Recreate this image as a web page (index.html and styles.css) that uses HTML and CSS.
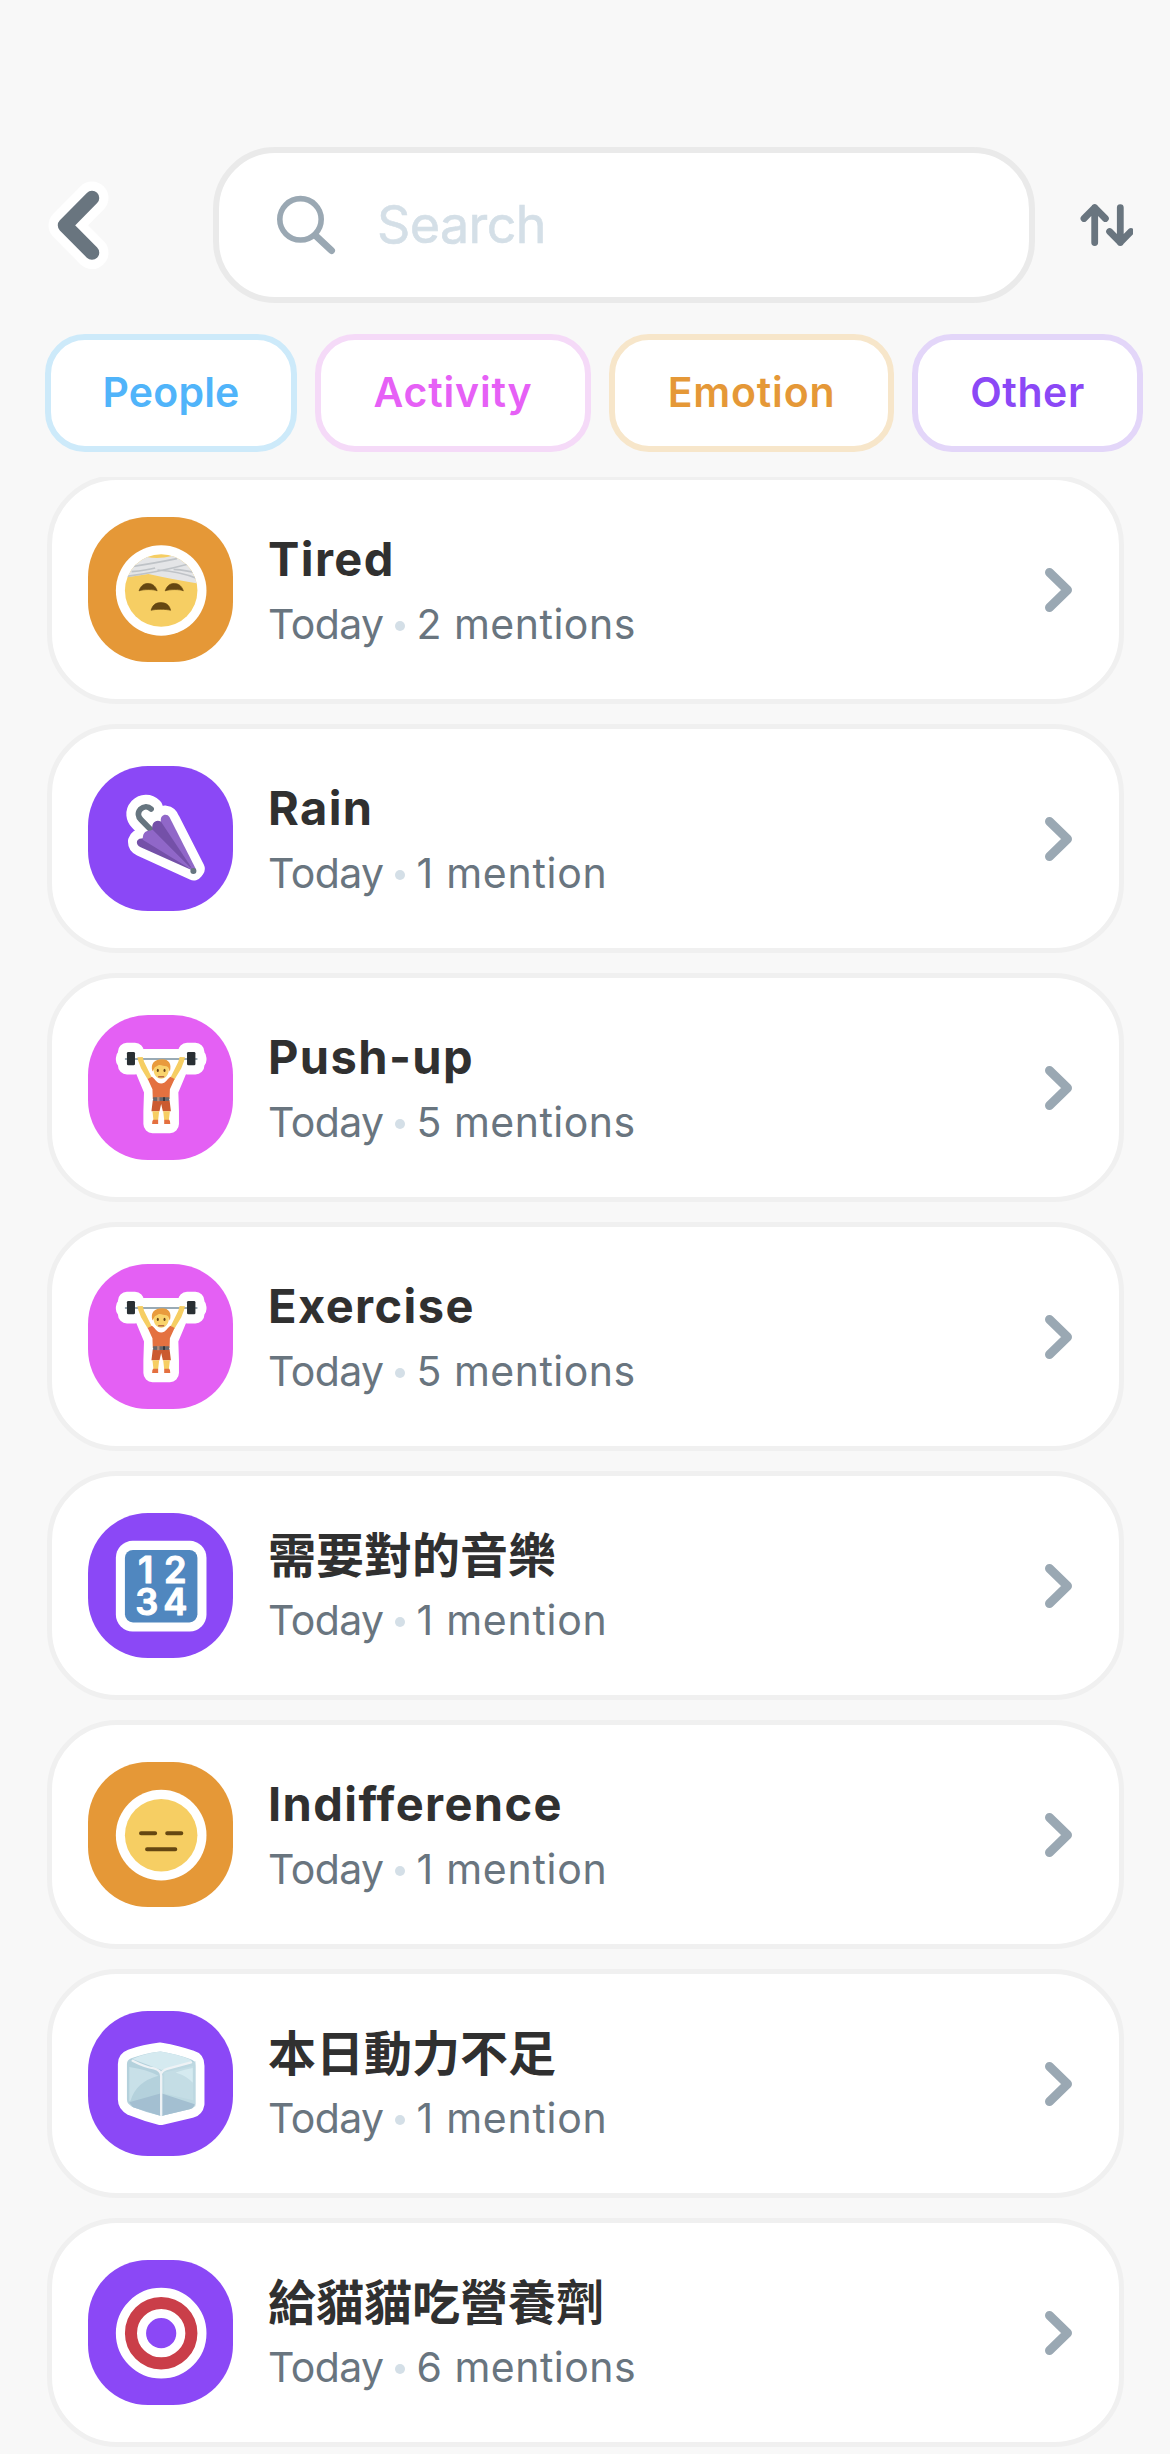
FILE: index.html
```html
<!DOCTYPE html>
<html lang="en">
  <head>
    <meta charset="UTF-8">
    <meta name="viewport" content="width=device-width,initial-scale=1.0">
    <title>Mentions</title>
    <link rel="stylesheet" href="styles.css">
  </head>
  <body>
    <!-- shared icons -->
    <svg class="defs" width="0" height="0">
      <symbol id="chevron" viewBox="0 0 27 44">
        <path d="M4.5 4.5L22.5 22L4.5 39.5" fill="none" stroke="#9aa8b3" stroke-width="9" stroke-linecap="round" stroke-linejoin="round"/>
      </symbol>
      <symbol id="lifter" viewBox="25 46 432 432">
        <g fill="#fff" stroke="#fff" stroke-width="54" stroke-linejoin="round" stroke-linecap="round">
          <path d="M141 156H165V196H141ZM320 156H345V196H320ZM135 174H351V180H135Z"/>
          <path d="M180 178L204 236L219 272L217 333V371H269V333L267 272L282 236L306 178Z"/>
        </g>
        <path d="M135 177H351" stroke="#99aab5" stroke-width="6"/>
        <rect x="141" y="156" width="24" height="40" rx="4" fill="#292f33"/>
        <rect x="320" y="156" width="25" height="40" rx="4" fill="#292f33"/>
        <path d="M172 172L188 171L192 185L214 230L204 240L183 205L175 184ZM314 172L298 171L294 185L272 230L282 240L303 205L311 184Z" fill="#f6ce63"/>
        <path d="M203 237L215 230C224 235 229 250 243 250C257 250 262 235 271 230L283 237L269 267L268 296H218L217 267Z" fill="#e47140"/>
        <path d="M218 300H268L272 333H248L243 311L238 333H214Z" fill="#cb5a30"/>
        <rect x="219" y="291" width="48" height="11" fill="#66666a"/>
        <rect x="231" y="290" width="7" height="13" fill="#b58a78"/>
        <rect x="249" y="291" width="5" height="11" fill="#292f33"/>
        <path d="M217 333H237L234 359H220ZM249 333H269L266 359H252Z" fill="#f6ce63"/>
        <path d="M219 358H234V371H216Q216 361 219 358ZM252 358H267Q270 361 270 371H252Z" fill="#e4703f"/>
        <path d="M220 205C220 188 230 182 243 182C256 182 266 188 266 205C267 225 255 236 243 236C231 236 219 225 220 205Z" fill="#f9d36c"/>
        <path d="M217 214C210 190 224 178 246 178C266 178 275 192 269 214C266 212 267 201 259 199C248 198 238 190 230 199C220 202 222 211 217 214Z" fill="#e99b3d"/>
        <ellipse cx="233" cy="211" rx="3" ry="5" fill="#664019"/>
        <ellipse cx="253" cy="211" rx="3" ry="5" fill="#664019"/>
        <path d="M234 230H252" fill="none" stroke="#b96a45" stroke-width="5"/>
      </symbol>
    </svg>

    <div class="header">
      <svg class="back" width="52" height="88" viewBox="48 180 52 88" fill="none" stroke-linecap="round" stroke-linejoin="round">
        <path d="M92 197L65 224.3L92 251.6" stroke="#fff" stroke-width="33"/>
        <path d="M92 197L65 224.3L92 251.6" stroke="#69757f" stroke-width="14.5"/>
      </svg>
      <div class="search">
        <svg width="60" height="60" viewBox="276 195 60 60" fill="none" stroke="#9aa8b3" stroke-linecap="round">
          <circle cx="300.5" cy="219.3" r="20.7" stroke-width="5.6"/>
          <path d="M316 236L331.5 250.5" stroke-width="7"/>
        </svg>
        <span>Search</span>
      </div>
      <svg class="sort" width="54" height="44" viewBox="1079 203 54 44" fill="none" stroke="#69757f" stroke-width="6.8" stroke-linecap="round" stroke-linejoin="round">
        <path d="M1094.7 242.6V207.6M1084 218.5L1094.7 207.6L1105.4 218.5"/>
        <path d="M1120.3 207.6V242.6M1109.6 231.5L1120.3 242.4L1131 231.5"/>
      </svg>
    </div>

    <div class="chips">
      <div class="chip people">People</div>
      <div class="chip activity">Activity</div>
      <div class="chip emotion">Emotion</div>
      <div class="chip other">Other</div>
    </div>

    <div class="list">
      <div class="card">
        <svg class="icon emotion_bg" viewBox="25 51 432 432">
          <clipPath id="face"><circle cx="243" cy="270" r="108"/></clipPath>
          <circle cx="243" cy="270" r="135" fill="#fff"/>
          <circle cx="243" cy="270" r="108" fill="#f6ce63"/>
          <g clip-path="url(#face)">
            <path d="M130 185L200 170Q235 178 275 167L300 162L360 210V250Q290 240 205 221L130 232Z" fill="#e4e5e7"/>
            <g fill="none" stroke="#bfc3c7" stroke-width="5">
              <path d="M150 200Q215 190 290 175M140 228Q230 216 325 191M155 214Q200 210 225 203M232 209Q295 212 355 236M280 207Q320 210 350 218"/>
            </g>
          </g>
          <path d="M177 271C182 257 190 249 204 249C218 249 227 258 231 271C222 266 190 266 177 271ZM255 271C260 257 268 249 282 249C296 249 305 258 309 271C300 266 268 266 255 271ZM213 329C217 314 226 306 242 306C258 306 268 314 271 329C258 325 226 325 213 329Z" fill="#654712" stroke="#654712" stroke-width="2" stroke-linejoin="round"/>
        </svg>
        <div class="info">
          <div class="title">Tired</div>
          <div class="sub"><span class="day">Today</span><i class="dot"></i><span>2 mentions</span></div>
        </div>
        <svg class="chevron"><use href="#chevron"/></svg>
      </div>

      <div class="card">
        <svg class="icon other_bg" viewBox="25 49 432 432">
          <g fill="none" stroke="#fff" stroke-linejoin="round" stroke-linecap="round">
            <path d="M213 240L183 209C174 200 172 188 181 178C191 168 204 168 213 177" stroke-width="72"/>
            <path d="M340 362L183 290Q172 285 172 274Q175 265 188 265Q188 244 211 240Q215 215 242 214Q240 196 256 195Q266 196 271 210L345 355Z" fill="#fff" stroke-width="56"/>
          </g>
          <path d="M213 240L183 209C174 200 172 188 181 178C191 168 204 168 213 177" fill="none" stroke="#66757f" stroke-width="17" stroke-linecap="round"/>
          <path d="M340 362L182 291C166 284 167 266 184 265L205 262Z" fill="#7450a8"/>
          <path d="M340 362L188 269C188 253 192 241 211 241L232 233Z" fill="#9067c8"/>
          <path d="M340 362L217 238C214 220 224 208 242 214L262 214Z" fill="#7450a8"/>
          <path d="M340 362L242 214C239 193 261 189 268 202L347 357Z" fill="#9067c8"/>
          <circle cx="339" cy="362" r="9" fill="#66757f"/>
        </svg>
        <div class="info">
          <div class="title">Rain</div>
          <div class="sub"><span class="day">Today</span><i class="dot"></i><span class="one">1 mention</span></div>
        </div>
        <svg class="chevron"><use href="#chevron"/></svg>
      </div>

      <div class="card">
        <svg class="icon activity_bg"><use href="#lifter"/></svg>
        <div class="info">
          <div class="title">Push-up</div>
          <div class="sub"><span class="day">Today</span><i class="dot"></i><span>5 mentions</span></div>
        </div>
        <svg class="chevron"><use href="#chevron"/></svg>
      </div>

      <div class="card">
        <svg class="icon activity_bg"><use href="#lifter"/></svg>
        <div class="info">
          <div class="title">Exercise</div>
          <div class="sub"><span class="day">Today</span><i class="dot"></i><span>5 mentions</span></div>
        </div>
        <svg class="chevron"><use href="#chevron"/></svg>
      </div>

      <div class="card">
        <svg class="icon other_bg" viewBox="25 40 432 432">
          <rect x="108" y="123" width="270" height="270" rx="50" fill="#fff"/>
          <rect x="135" y="150" width="216" height="216" rx="24" fill="#5087bf"/>
          <text class="digits"><tspan x="197" y="249">1</tspan><tspan x="285" y="249">2</tspan><tspan x="200" y="345">3</tspan><tspan x="285" y="345">4</tspan></text>
        </svg>
        <div class="info">
          <div class="title cjk">需要對的音樂</div>
          <div class="sub"><span class="day">Today</span><i class="dot"></i><span class="one">1 mention</span></div>
        </div>
        <svg class="chevron"><use href="#chevron"/></svg>
      </div>

      <div class="card">
        <svg class="icon emotion_bg" viewBox="25 37 432 432">
          <circle cx="243" cy="255" r="135" fill="#fff"/>
          <circle cx="243" cy="255" r="108" fill="#f6ce63"/>
          <path d="M183 249H225M261 249H303M201 297H285" stroke="#654712" stroke-width="12" stroke-linecap="round"/>
        </svg>
        <div class="info">
          <div class="title">Indifference</div>
          <div class="sub"><span class="day">Today</span><i class="dot"></i><span class="one">1 mention</span></div>
        </div>
        <svg class="chevron"><use href="#chevron"/></svg>
      </div>

      <div class="card">
        <svg class="icon other_bg" viewBox="25 34 432 432">
          <path d="M241 155Q290 163 331 178Q345 182 345 197V310Q343 322 331 326Q285 337 243 347Q200 337 156 319Q141 311 141 298V192Q141 180 154 175Q195 160 241 155Z" fill="#fff" stroke="#fff" stroke-width="54" stroke-linejoin="round"/>
          <path d="M241 155Q290 163 331 178Q345 182 345 197V310Q343 322 331 326Q285 337 243 347Q200 337 156 319Q141 311 141 298V192Q141 180 154 175Q195 160 241 155Z" fill="#b4d1dc"/>
          <path d="M243 211L345 184V318L243 347Z" fill="#bdd8e1"/>
          <path d="M148 201Q198 208 235 227Q168 245 152 301L148 303Z" fill="#c8e0e8"/>
          <path d="M252 217L338 198V300L252 280Z" fill="#c4dde5"/>
          <path d="M286 217Q315 208 337 204V248Q321 228 286 217Z" fill="#d5eaf0"/>
          <path d="M148 306L243 279L343 312Q340 324 327 327L243 347L159 321Z" fill="#a3bfd1"/>
          <path d="M157 177Q195 160 241 155Q288 162 331 179L335 185L244 210Z" fill="#d5eaf0"/>
          <path d="M158 182Q195 201 222 205Q243 211 243 228V344M243 220Q247 210 266 205L332 187" fill="none" stroke="#eef2f5" stroke-width="7" stroke-linecap="round"/>
        </svg>
        <div class="info">
          <div class="title cjk">本日動力不足</div>
          <div class="sub"><span class="day">Today</span><i class="dot"></i><span class="one">1 mention</span></div>
        </div>
        <svg class="chevron"><use href="#chevron"/></svg>
      </div>

      <div class="card">
        <svg class="icon other_bg" viewBox="25 61 432 432">
          <circle cx="243" cy="279" r="90" fill="none" stroke="#fff" stroke-width="90"/>
          <circle cx="243" cy="279" r="90" fill="none" stroke="#ca3e49" stroke-width="36"/>
        </svg>
        <div class="info">
          <div class="title cjk">給貓貓吃營養劑</div>
          <div class="sub"><span class="day">Today</span><i class="dot"></i><span>6 mentions</span></div>
        </div>
        <svg class="chevron"><use href="#chevron"/></svg>
      </div>
    </div>
  </body>
</html>
```

FILE: styles.css
```css
*{
  margin:0;
  padding:0;
  box-sizing:border-box;
}
body{
  width:1170px;
  height:2454px;
  overflow:hidden;
  background-color:#f8f8f8;
  font-family:Inter, "Noto Sans CJK TC", sans-serif;
}
svg{
  display:block;
  flex-shrink:0;
}
.defs{
  width:0;
  height:0;
}
.header{
  display:flex;
  align-items:center;
  height:303px;
  padding:147px 37px 0 48px;
}
.back{
  overflow:visible;
}
.search{
  display:flex;
  align-items:center;
  width:822px;
  height:156px;
  margin-left:113px;
  padding-left:57px;
  background-color:#fff;
  border:6px solid #eaeaea;
  border-radius:62px;
  font-size:52px;
  letter-spacing:-0.6px;
  color:#d4dfe7;
}
.search span{
  margin-left:41px;
  padding-bottom:2px;
  -webkit-text-stroke:0.6px #d4dfe7;
}
.sort{
  margin-left:44px;
}
.chips{
  display:flex;
  gap:18px;
  margin-top:31px;
  padding-left:45px;
}
.chip{
  height:118px;
  line-height:104px;
  text-align:center;
  font-size:41px;
  font-weight:600;
  letter-spacing:0.2px;
  background-color:#fff;
  border:6px solid;
  border-radius:40px;
}
.people{
  width:252px;
  color:#50b4fa;
  border-color:#cdeafa;
}
.activity{
  width:276px;
  color:#e660f6;
  border-color:#f5daf8;
  letter-spacing:0.8px;
}
.emotion{
  width:285px;
  color:#e59837;
  border-color:#f7e6ca;
  letter-spacing:0.8px;
}
.other{
  width:231px;
  color:#8b48f6;
  border-color:#e3d6f9;
  letter-spacing:0.6px;
}
.list{
  height:1977px;
  margin-top:25px;
  padding:0 46px 0 47px;
  overflow:hidden;
}
.card{
  display:flex;
  align-items:center;
  height:229px;
  margin-bottom:20px;
  padding:0 47px 0 36px;
  background-color:#fff;
  border:5px solid #f0f0f0;
  border-radius:70px;
}
.card:first-child{
  margin-top:-2px;
}
.icon{
  width:145px;
  height:145px;
  border-radius:60px;
}
.emotion_bg{
  background-color:#e59837;
}
.other_bg{
  background-color:#8b48f6;
}
.activity_bg{
  background-color:#e460f4;
}
.digits{
  font-family:Inter, sans-serif;
  font-size:108px;
  font-weight:600;
  text-anchor:middle;
  fill:#fff;
  stroke:#fff;
  stroke-width:3;
  stroke-linejoin:round;
}
.info{
  flex:1;
  margin-left:35px;
  padding-top:3px;
}
.title{
  height:66px;
  line-height:66px;
  font-size:47px;
  font-weight:700;
  letter-spacing:1.4px;
  color:#303030;
}
.cjk{
  padding-top:1px;
  font-size:48px;
  letter-spacing:0;
}
.sub{
  display:flex;
  align-items:center;
  height:64px;
  font-size:41px;
  color:#69757f;
}
.day{
  letter-spacing:-0.6px;
}
.dot{
  width:10px;
  height:10px;
  margin:3px 11px 0 12px;
  border-radius:50%;
  background-color:#d4dfe7;
}
.sub span:last-child{
  letter-spacing:0.5px;
}
.sub .one:last-child{
  letter-spacing:0.75px;
}
.chevron{
  width:27px;
  height:44px;
}
```
